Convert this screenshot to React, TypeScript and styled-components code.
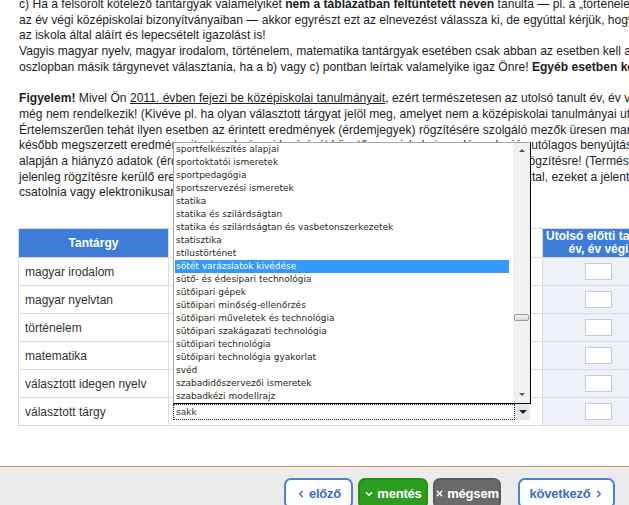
import React from "react";
import styled, { createGlobalStyle } from "styled-components";
import { ChevronDown, ChevronLeft, ChevronRight, X } from "lucide-react";

const GlobalStyle = createGlobalStyle`
  html, body {
    margin: 0;
    padding: 0;
    background: #fff;
    overflow: hidden;
  }
  body {
    font-family: "Liberation Sans", Arial, sans-serif;
  }
`;

const Page = styled.div`
  width: 629px;
  height: 505px;
  overflow: hidden;
  display: flex;
  flex-direction: column;
`;

const Main = styled.main`
  flex: 1;
  min-height: 0;
  padding-left: 18px;
`;

const Intro = styled.div`
  margin-top: -3px;
  padding-left: 1px;
  font-size: 12.1px;
  line-height: 15.7px;
  color: #1e1e1e;
  white-space: nowrap;

  p {
    margin: 0 0 15.7px;
  }
  u {
    text-decoration-thickness: 1px;
  }
`;

const Grid = styled.table`
  margin-top: 27px;
  border-collapse: collapse;
  table-layout: fixed;
  width: 636px;
  font-size: 12px;
`;

const Th = styled.th<{ $blank?: boolean }>`
  height: 29px;
  padding: 0 3px;
  box-sizing: border-box;
  background: ${(p) => (p.$blank ? "#fff" : "#3d7dd8")};
  color: #fff;
  font-weight: bold;
  font-size: 12px;
  line-height: 13px;
  text-align: center;
  border: 1px solid #d8dce2;
  white-space: nowrap;
`;

const Td = styled.td<{ $tint?: boolean }>`
  height: 28px;
  padding: 0 6px;
  box-sizing: border-box;
  border: 1px solid #d8dce2;
  background: ${(p) => (p.$tint ? "#eef2f8" : "#fff")};
  color: #333;
  text-align: ${(p) => (p.$tint ? "center" : "left")};
  vertical-align: middle;
`;

const SelectCell = styled.td`
  height: 28px;
  padding: 0 0 0 4px;
  box-sizing: border-box;
  border: 1px solid #d8dce2;
  background: #fff;
  vertical-align: middle;
`;

const GradeBox = styled.div`
  display: inline-block;
  width: 25px;
  height: 15px;
  border: 1px solid #c3ccd8;
  background: #fff;
  vertical-align: middle;
`;

const SelectWrap = styled.div`
  position: relative;
  display: flex;
  width: 357px;
  height: 16px;
  font-family: "DejaVu Sans", Verdana, sans-serif;
  font-size: 9px;
`;

const SelectValue = styled.div`
  flex: 1;
  border: 1px dotted #222;
  padding-left: 2px;
  line-height: 14px;
  color: #333;
`;

const SelectArrow = styled.div`
  width: 15px;
  display: flex;
  align-items: center;
  justify-content: center;
  background: #e4e9f0;

  &::after {
    content: "";
    border-left: 4px solid transparent;
    border-right: 4px solid transparent;
    border-top: 4px solid #222;
  }
`;

const Popup = styled.div`
  position: absolute;
  left: 0;
  bottom: 100%;
  width: 358px;
  height: 262px;
  box-sizing: border-box;
  display: flex;
  background: #fff;
  border: 1px solid;
  border-color: #a5a5a5 #000 #000 #a5a5a5;
`;

const List = styled.ul`
  flex: 1;
  margin: 0;
  padding: 0 4px 0 1px;
  list-style: none;
`;

const Item = styled.li<{ $active?: boolean }>`
  height: 13px;
  line-height: 13px;
  padding-left: 1px;
  white-space: nowrap;
  color: ${(p) => (p.$active ? "#fff" : "#2a2a22")};
  background: ${(p) => (p.$active ? "#3399ff" : "transparent")};
`;

const Scrollbar = styled.div`
  width: 17px;
  display: flex;
  flex-direction: column;
  align-items: center;
  background: #f0f0f0;
`;

const Arrow = styled.div<{ $down?: boolean }>`
  height: 16px;
  display: flex;
  align-items: center;
  justify-content: center;

  &::after {
    content: "";
    border-left: 3px solid transparent;
    border-right: 3px solid transparent;
    ${(p) =>
      p.$down ? "border-top: 3px solid #555;" : "border-bottom: 3px solid #555;"}
  }
`;

const Track = styled.div`
  flex: 1;
  width: 100%;
  display: flex;
  flex-direction: column;
  align-items: center;
`;

const Thumb = styled.div`
  width: 13px;
  height: 5px;
  border: 1px solid #9a9a9a;
  border-radius: 2px;
  background: linear-gradient(#f4f4f4, #dcdcdc);
`;

const Footer = styled.footer`
  height: 39px;
  box-sizing: border-box;
  flex-shrink: 0;
  border-top: 1px solid #d28a5b;
  background: #ebebeb;
  display: flex;
  justify-content: flex-end;
  align-items: flex-start;
  padding: 11px 14px 0 0;
`;

const ButtonRow = styled.div`
  display: flex;
  gap: 5px;
`;

const NextGap = styled.div`
  width: 7px;
`;

type Variant = "outline" | "green" | "grey";

const Button = styled.button<{ $variant: Variant; $width: number }>`
  width: ${(p) => p.$width}px;
  height: 31px;
  flex-shrink: 0;
  display: flex;
  align-items: center;
  justify-content: center;
  gap: 3px;
  border-radius: 7px;
  font-family: "Liberation Sans", Arial, sans-serif;
  font-weight: bold;
  font-size: 13px;
  letter-spacing: -0.2px;
  padding: 0;
  white-space: nowrap;
  border: 2px solid
    ${(p) =>
      p.$variant === "green" ? "#23900f" : p.$variant === "grey" ? "#5b5b5b" : "#4b80d3"};
  background: ${(p) =>
    p.$variant === "green" ? "#2b9d1f" : p.$variant === "grey" ? "#6a6a6a" : "#fff"};
  color: ${(p) => (p.$variant === "outline" ? "#3d6ec3" : "#fff")};

  svg {
    flex-shrink: 0;
  }
`;

const subjects = [
  "magyar irodalom",
  "magyar nyelvtan",
  "történelem",
  "matematika",
  "választott idegen nyelv",
];

const options = [
  "sportfelkészítés alapjai",
  "sportoktatói ismeretek",
  "sportpedagógia",
  "sportszervezési ismeretek",
  "statika",
  "statika és szilárdságtan",
  "statika és szilárdságtan és vasbetonszerkezetek",
  "statisztika",
  "stílustörténet",
  "sötét varázslatok kivédése",
  "sütő- és édesipari technológia",
  "sütőipari gépek",
  "sütőipari minőség-ellenőrzés",
  "sütőipari műveletek és technológia",
  "sütőipari szakágazati technológia",
  "sütőipari technológia",
  "sütőipari technológia gyakorlat",
  "svéd",
  "szabadidőszervezői ismeretek",
  "szabadkézi modellrajz",
];

const activeOption = "sötét varázslatok kivédése";
const scrollFraction = 0.7;
const trackSpace = 260 - 32 - 7;

const App = () => {
  return (
    <>
      <GlobalStyle />
      <Page>
        <Main>
          <Intro>
            <p>
              c) Ha a felsorolt kötelező tantárgyak valamelyikét{" "}
              <b>nem a táblázatban feltüntetett néven</b> tanulta — pl. a „történelem” helyett
              „történelem és állampolgári ismeretek” néven szerepel
              <br />
              az év végi középiskolai bizonyítványaiban — akkor egyrészt ezt az elnevezést válassza
              ki, de egyúttal kérjük, hogy e-mailben küldje el
              <br />
              az iskola által aláírt és lepecsételt igazolást is!
              <br />
              Vagyis magyar nyelv, magyar irodalom, történelem, matematika tantárgyak esetében csak
              abban az esetben kell a „Tantárgy”
              <br />
              oszlopban másik tárgynevet választania, ha a b) vagy c) pontban leírtak valamelyike
              igaz Önre! <b>Egyéb esetben kérjük, ne módosítsa!</b>
            </p>
            <p>
              <b>Figyelem!</b> Mivel Ön <u>2011. évben fejezi be középiskolai tanulmányait</u>, ezért
              természetesen az utolsó tanult év, év végi eredményeivel
              <br />
              még nem rendelkezik! (Kivéve pl. ha olyan választott tárgyat jelöl meg, amelyet nem a
              középiskolai tanulmányai utolsó évében tanult.)
              <br />
              Értelemszerűen tehát ilyen esetben az érintett eredmények (érdemjegyek) rögzítésére
              szolgáló mezők üresen maradnak.
              <br />
              később megszerzett eredményeit a tanulmányai lezárását követően az iskola igazolása
              alapján utólagos benyújtással
              <br />
              alapján a hiányzó adatok (érdemjegyek) pótlólagosan, a felvételi eljárás során
              utólag kerülnek rögzítésre! (Természetesen
              <br />
              jelenleg rögzítésre kerülő eredményeit igazolja a középiskola által kiállított okirat
              hiteles másolattal, ezeket a jelentkezéshez
              <br />
              csatolnia vagy elektronikusan feltöltenie szükséges.
            </p>
          </Intro>
          <Grid>
            <colgroup>
              <col style={{ width: 150 }} />
              <col style={{ width: 374 }} />
              <col style={{ width: 112 }} />
            </colgroup>
            <thead>
              <tr>
                <Th>Tantárgy</Th>
                <Th $blank />
                <Th>
                  Utolsó előtti tanult
                  <br />
                  év, év végi
                </Th>
              </tr>
            </thead>
            <tbody>
              {subjects.map((s) => (
                <tr key={s}>
                  <Td>{s}</Td>
                  <Td />
                  <Td $tint>
                    <GradeBox />
                  </Td>
                </tr>
              ))}
              <tr>
                <Td>választott tárgy</Td>
                <SelectCell>
                  <SelectWrap>
                    <SelectValue>sakk</SelectValue>
                    <SelectArrow />
                    <Popup>
                      <List>
                        {options.map((o) => (
                          <Item key={o} $active={o === activeOption}>
                            {o}
                          </Item>
                        ))}
                      </List>
                      <Scrollbar>
                        <Arrow />
                        <Track>
                          <Thumb style={{ marginTop: Math.round(trackSpace * scrollFraction) }} />
                        </Track>
                        <Arrow $down />
                      </Scrollbar>
                    </Popup>
                  </SelectWrap>
                </SelectCell>
                <Td $tint>
                  <GradeBox />
                </Td>
              </tr>
            </tbody>
          </Grid>
        </Main>
        <Footer>
          <ButtonRow>
            <Button $variant="outline" $width={69}>
              <ChevronLeft size={10} strokeWidth={4} />
              előző
            </Button>
            <Button $variant="green" $width={70}>
              <ChevronDown size={10} strokeWidth={4} />
              mentés
            </Button>
            <Button $variant="grey" $width={68}>
              <X size={9} strokeWidth={4} />
              mégsem
            </Button>
            <NextGap />
            <Button $variant="outline" $width={97}>
              következő
              <ChevronRight size={10} strokeWidth={4} />
            </Button>
          </ButtonRow>
        </Footer>
      </Page>
    </>
  );
};

export default App;
